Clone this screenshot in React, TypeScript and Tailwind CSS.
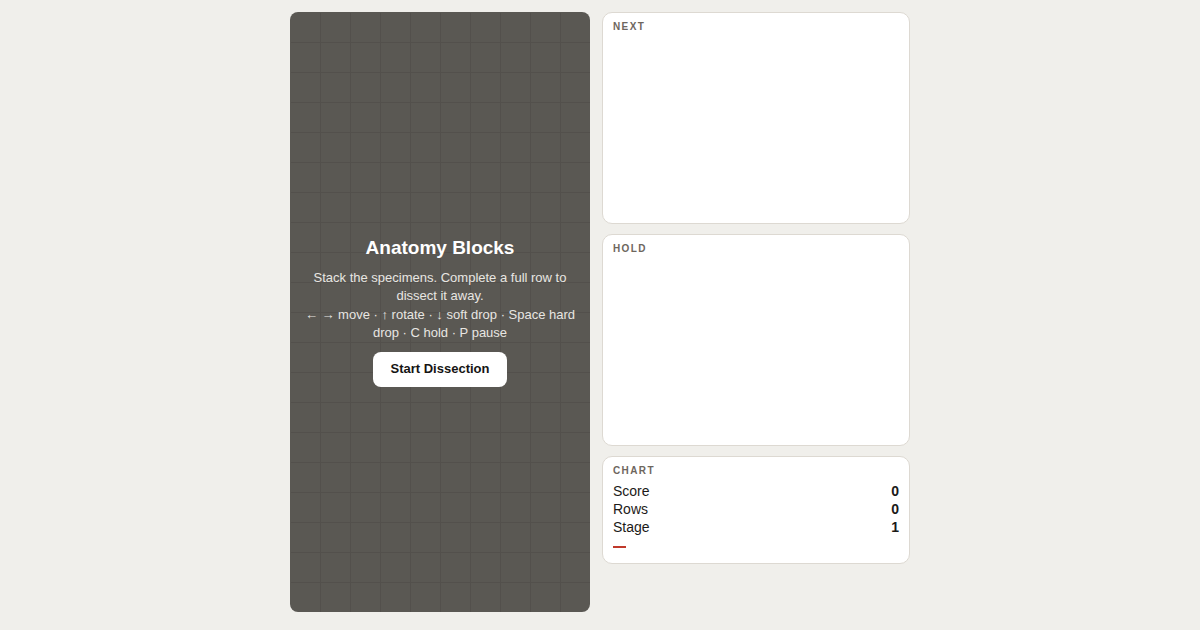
import React from 'react';

const cells = Array.from({ length: 200 }, (_, i) => i);

function Panel({ label, className, children }: { label: string; className?: string; children?: React.ReactNode }) {
    return (
        <div className={`bg-white border border-[#ddd9d2] rounded-[10px] px-[10px] pt-[7px] ${className ?? ''}`}>
            <div className="text-[10px] font-bold tracking-[0.14em] text-[#6e665e] leading-[13px]">{label}</div>
            {children}
        </div>
    );
}

function Stat({ name, value }: { name: string; value: number }) {
    return (
        <div className="flex justify-between text-[14px] leading-[18px] text-[#1c1a18]">
            <span>{name}</span>
            <span className="font-bold">{value}</span>
        </div>
    );
}

export default function App() {
    return (
        <div className="min-h-screen bg-[#f0efeb] font-['Liberation_Sans',Arial,sans-serif]">
            <div className="flex justify-center gap-[12px] pt-[12px]">
                {/* Board */}
                <div className="relative w-[300px] h-[600px] rounded-[8px] overflow-hidden bg-[#5a5853] pl-px pt-px">
                    <div className="grid grid-cols-[repeat(10,30px)] grid-rows-[repeat(20,30px)]">
                        {cells.map((i) => (
                            <div key={i} className="border-r border-b border-[#53504c]" />
                        ))}
                    </div>

                    {/* Start overlay */}
                    <div className="absolute inset-0 flex flex-col items-center justify-center text-center px-[14px] pb-[2px]">
                        <h1 className="text-[19px] font-bold text-white leading-[24px] mb-[9px]">Anatomy Blocks</h1>
                        <p className="text-[13px] leading-[18px] text-[#e8e6e2]">
                            Stack the specimens. Complete a full row to dissect it away.
                        </p>
                        <p className="text-[13px] leading-[18px] text-[#e8e6e2] mt-px">
                            ← → move · ↑ rotate · ↓ soft drop · Space hard drop · C hold · P pause
                        </p>
                        <button className="mt-[10px] bg-white text-[#151413] text-[13px] font-bold rounded-[8px] px-[18px] h-[35px]">
                            Start Dissection
                        </button>
                    </div>
                </div>

                {/* Side column */}
                <div className="w-[308px] flex flex-col gap-[10px]">
                    <Panel label="NEXT" className="h-[212px]" />
                    <Panel label="HOLD" className="h-[212px]" />
                    <Panel label="CHART" className="h-[108px]">
                        <div className="mt-[5px]">
                            <Stat name="Score" value={0} />
                            <Stat name="Rows" value={0} />
                            <Stat name="Stage" value={1} />
                        </div>
                        {/* status marker */}
                        <div className="mt-[10px] w-[13px] h-[2px] bg-[#c0392b]" />
                    </Panel>
                </div>
            </div>
        </div>
    );
}
